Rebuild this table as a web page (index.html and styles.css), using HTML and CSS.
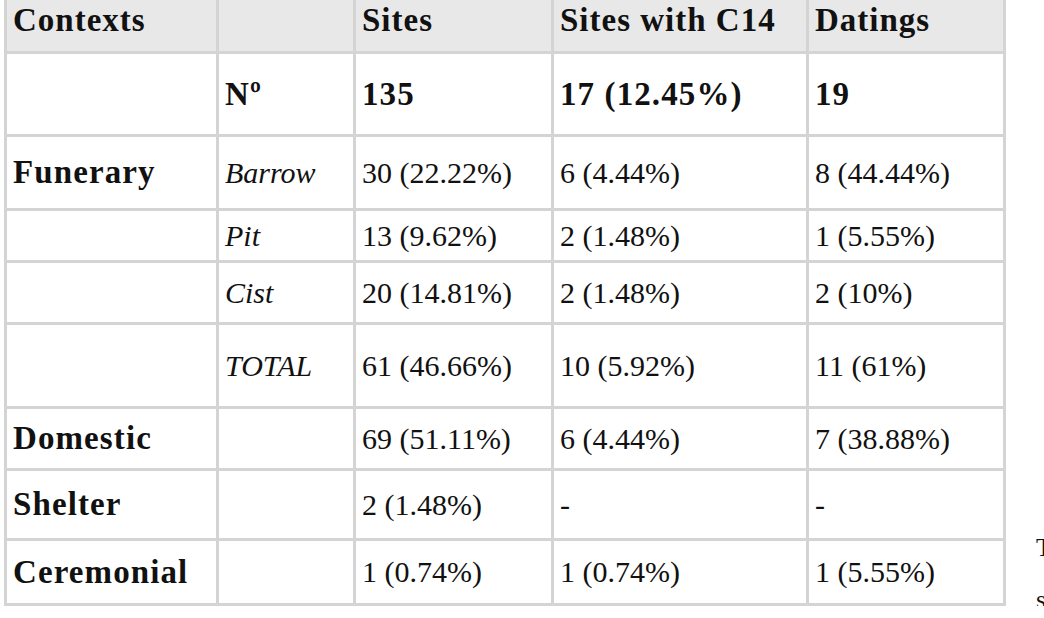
FILE: index.html
```html
<!DOCTYPE html>
<html lang="en">
<head>
<meta charset="utf-8">
<title>Contexts table</title>
<link rel="stylesheet" href="styles.css">
</head>
<body>
<div class="page">
  <table class="data">
    <thead>
      <tr class="r-head">
        <th class="c1">Contexts</th>
        <th class="c2"></th>
        <th class="c3">Sites</th>
        <th class="c4">Sites with C14</th>
        <th class="c5">Datings</th>
      </tr>
    </thead>
    <tbody>
      <tr class="r-n">
        <td></td>
        <td class="b">Nº</td>
        <td class="b">135</td>
        <td class="b">17 (12.45%)</td>
        <td class="b">19</td>
      </tr>
      <tr class="r-barrow">
        <td class="b">Funerary</td>
        <td class="i">Barrow</td>
        <td>30 (22.22%)</td>
        <td>6 (4.44%)</td>
        <td>8 (44.44%)</td>
      </tr>
      <tr class="r-pit">
        <td></td>
        <td class="i">Pit</td>
        <td>13 (9.62%)</td>
        <td>2 (1.48%)</td>
        <td>1 (5.55%)</td>
      </tr>
      <tr class="r-cist">
        <td></td>
        <td class="i">Cist</td>
        <td>20 (14.81%)</td>
        <td>2 (1.48%)</td>
        <td>2 (10%)</td>
      </tr>
      <tr class="r-total">
        <td></td>
        <td class="i">TOTAL</td>
        <td>61 (46.66%)</td>
        <td>10 (5.92%)</td>
        <td>11 (61%)</td>
      </tr>
      <tr class="r-dom">
        <td class="b">Domestic</td>
        <td></td>
        <td>69 (51.11%)</td>
        <td>6 (4.44%)</td>
        <td>7 (38.88%)</td>
      </tr>
      <tr class="r-shel">
        <td class="b">Shelter</td>
        <td></td>
        <td>2 (1.48%)</td>
        <td>-</td>
        <td>-</td>
      </tr>
      <tr class="r-cer">
        <td class="b">Ceremonial</td>
        <td></td>
        <td>1 (0.74%)</td>
        <td>1 (0.74%)</td>
        <td>1 (5.55%)</td>
      </tr>
    </tbody>
  </table>
  <p class="aside">Table 1. Contexts<br>sites and datings</p>
</div>
</body>
</html>
```

FILE: styles.css
```css
html, body {
  margin: 0;
  padding: 0;
  background: #ffffff;
  overflow: hidden;
}

body {
  font-family: "Liberation Serif", "Times New Roman", serif;
  color: #111111;
}

.page {
  display: flex;
  align-items: flex-start;
  gap: 30px;
  padding-left: 4px;
  margin-top: -14px;
  width: 1400px;
}

.data {
  border-collapse: collapse;
  border: 3px solid #d4d4d4;
  flex: none;
}

.data th,
.data td {
  border: 3px solid #d4d4d4;
  padding: 0 6px;
  text-align: left;
  vertical-align: middle;
  font-size: 30px;
  white-space: nowrap;
  box-sizing: border-box;
}

.data th {
  background: #e8e8e8;
  font-weight: bold;
  font-size: 33px;
  letter-spacing: 1px;
}

.c1 { width: 212px; }
.c2 { width: 137px; }
.c3 { width: 198px; }
.c4 { width: 255px; }
.c5 { width: 197px; }

.data td.b {
  font-weight: bold;
  font-size: 33px;
  letter-spacing: 1.1px;
}

.i {
  font-style: italic;
}

.r-head td, .r-head th { height: 65px; }
.r-n td { height: 83px; }
.r-barrow td { height: 74px; }
.r-pit td { height: 52px; }
.r-cist td { height: 62px; }
.r-total td { height: 84px; }
.r-dom td { height: 62px; }
.r-shel td { height: 70px; }
.r-cer td { height: 65px; }

.aside {
  margin: 0;
  align-self: flex-end;
  font-size: 26px;
  line-height: 52px;
  margin-bottom: -20px;
  white-space: nowrap;
}
```
